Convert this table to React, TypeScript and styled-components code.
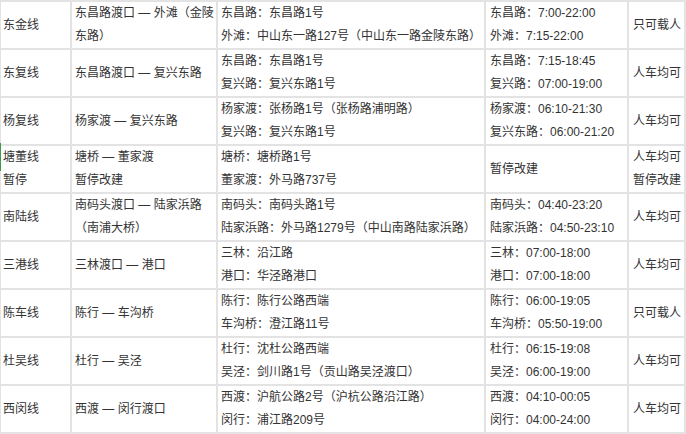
import React from 'react';
import styled, { createGlobalStyle } from 'styled-components';

const GlobalStyle = createGlobalStyle`
  html, body {
    margin: 0;
    padding: 0;
    background: #fff;
  }
`;

const Page = styled.div`
  position: relative;
  width: 686px;
`;

const FerryGrid = styled.div`
  display: grid;
  grid-template-columns: 69px 144px 266px 141px 55px;
  grid-auto-rows: 46px;
  gap: 2px;
  padding: 2px 2px 2px 1px;
  width: 686px;
  box-sizing: border-box;
  background: #e3e3e3;
  font-family: "Liberation Sans", "Noto Sans CJK SC", sans-serif;
  font-size: 12px;
  color: #333;
`;

const Cell = styled.div<{ $padLeft: number }>`
  display: flex;
  flex-direction: column;
  justify-content: center;
  background: #fff;
  padding: 0 2px 0 ${(p) => p.$padLeft}px;
  line-height: 23px;
  white-space: nowrap;
  overflow: hidden;
`;

const Line = styled.div``;

// green focus mark the source page leaves on the left edge
const EdgeMark = styled.div`
  position: absolute;
  left: 0;
  top: 143px;
  width: 1px;
  height: 28px;
  background: #3d9a4a;
`;

type Row = {
  name: string[];
  route: string[];
  piers: string[];
  hours: string[];
  kind: string[];
};

const rows: Row[] = [
  {
    name: ['东金线'],
    route: ['东昌路渡口 — 外滩（金陵', '东路）'],
    piers: ['东昌路：东昌路1号', '外滩：中山东一路127号（中山东一路金陵东路）'],
    hours: ['东昌路：7:00-22:00', '外滩：7:15-22:00'],
    kind: ['只可载人'],
  },
  {
    name: ['东复线'],
    route: ['东昌路渡口 — 复兴东路'],
    piers: ['东昌路：东昌路1号', '复兴路：复兴东路1号'],
    hours: ['东昌路：7:15-18:45', '复兴路：07:00-19:00'],
    kind: ['人车均可'],
  },
  {
    name: ['杨复线'],
    route: ['杨家渡 — 复兴东路'],
    piers: ['杨家渡：张杨路1号（张杨路浦明路）', '复兴路：复兴东路1号'],
    hours: ['杨家渡：06:10-21:30', '复兴东路：06:00-21:20'],
    kind: ['人车均可'],
  },
  {
    name: ['塘董线', '暂停'],
    route: ['塘桥 — 董家渡', '暂停改建'],
    piers: ['塘桥：塘桥路1号', '董家渡：外马路737号'],
    hours: ['暂停改建'],
    kind: ['人车均可', '暂停改建'],
  },
  {
    name: ['南陆线'],
    route: ['南码头渡口 — 陆家浜路', '（南浦大桥）'],
    piers: ['南码头：南码头路1号', '陆家浜路：外马路1279号（中山南路陆家浜路）'],
    hours: ['南码头：04:40-23:20', '陆家浜路：04:50-23:10'],
    kind: ['人车均可'],
  },
  {
    name: ['三港线'],
    route: ['三林渡口 — 港口'],
    piers: ['三林：沿江路', '港口：华泾路港口'],
    hours: ['三林：07:00-18:00', '港口：07:00-18:00'],
    kind: ['人车均可'],
  },
  {
    name: ['陈车线'],
    route: ['陈行 — 车沟桥'],
    piers: ['陈行：陈行公路西端', '车沟桥：澄江路11号'],
    hours: ['陈行：06:00-19:05', '车沟桥：05:50-19:00'],
    kind: ['只可载人'],
  },
  {
    name: ['杜吴线'],
    route: ['杜行 — 吴泾'],
    piers: ['杜行：沈杜公路西端', '吴泾：剑川路1号（贡山路吴泾渡口）'],
    hours: ['杜行：06:15-19:08', '吴泾：06:00-19:00'],
    kind: ['人车均可'],
  },
  {
    name: ['西闵线'],
    route: ['西渡 — 闵行渡口'],
    piers: ['西渡：沪航公路2号（沪杭公路沿江路）', '闵行：浦江路209号'],
    hours: ['西渡：04:10-00:05', '闵行：04:00-24:00'],
    kind: ['人车均可'],
  },
];

const columns: { key: keyof Row; pad: number }[] = [
  { key: 'name', pad: 2 },
  { key: 'route', pad: 3 },
  { key: 'piers', pad: 3 },
  { key: 'hours', pad: 4 },
  { key: 'kind', pad: 4 },
];

const App = () => {
  return (
    <Page>
      <GlobalStyle />
      <FerryGrid>
        {rows.map((row, r) =>
          columns.map((col) => (
            <Cell key={`${r}-${col.key}`} $padLeft={col.pad}>
              {row[col.key].map((text, i) => (
                <Line key={i}>{text}</Line>
              ))}
            </Cell>
          ))
        )}
      </FerryGrid>
      <EdgeMark />
    </Page>
  );
};

export default App;
